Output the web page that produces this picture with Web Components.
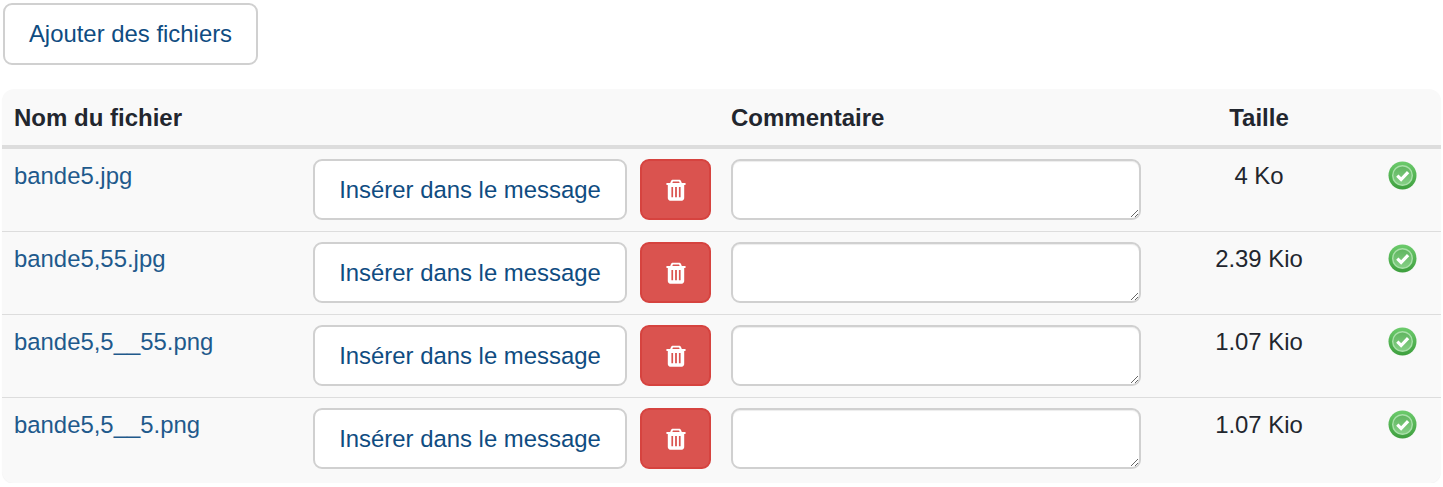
<!DOCTYPE html>
<html lang="fr">
<head>
<meta charset="utf-8">
<title>Fichiers</title>
<style>
  html, body { margin: 0; background: #fff; }
  body { font-family: "Liberation Sans", Arial, sans-serif; color: #22262e; }
</style>
</head>
<body>
<x-attachments>
  <x-button slot="action" style="--w: 255px; --h: 62px">Ajouter des fichiers</x-button>
  <x-file-row name="bande5.jpg" size="4 Ko"></x-file-row>
  <x-file-row name="bande5,55.jpg" size="2.39 Kio"></x-file-row>
  <x-file-row name="bande5,5__55.png" size="1.07 Kio"></x-file-row>
  <x-file-row name="bande5,5__5.png" size="1.07 Kio" last></x-file-row>
</x-attachments>

<script>
/* global HTMLElement customElements */

const COLUMNS = '299px 418px 434px 212px 76px';

class XButton extends HTMLElement {
  constructor() {
    super();
    const shadowRoot = this.attachShadow({ mode: 'open' });
    shadowRoot.innerHTML = `
      <style>
        :host {
          display: inline-flex;
          flex: none;
          align-items: center;
          justify-content: center;
          box-sizing: border-box;
          width: var(--w);
          height: var(--h);
          background: #fff;
          border: 2px solid #d0d0d0;
          border-radius: 9px;
          color: #0f4c81;
          font-size: 23.9px;
          cursor: pointer;
        }
      </style>
      <slot></slot>
    `;
  }
}
customElements.define('x-button', XButton);

class XDeleteButton extends HTMLElement {
  constructor() {
    super();
    const shadowRoot = this.attachShadow({ mode: 'open' });
    shadowRoot.innerHTML = `
      <style>
        :host {
          display: inline-flex;
          flex: none;
          align-items: center;
          justify-content: center;
          box-sizing: border-box;
          width: 71px;
          height: 61px;
          background: #da534f;
          border: 2px solid #d6433f;
          border-radius: 9px;
          cursor: pointer;
        }
        svg { display: block; }
      </style>
      <svg width="20" height="22" viewBox="0 0 20 22">
        <path fill="#fff" fill-rule="evenodd" d="M7 .8h6c.9 0 1.600.5 2 1.300l.8 1.800H19c.4 0 .7.300.7.7v.6c0 .4-.3.7-.7.7h-.8v13.200c0 1.400-1 2.600-2.400 2.600H4.200c-1.400 0-2.400-1.200-2.400-2.600V5.900H1c-.4 0-.7-.3-.7-.7v-.6c0-.4.300-.7.7-.7h3.200L5 2.100c.4-.8 1.100-1.300 2-1.300zM7 2.600l-.7 1.300h7.400L13 2.600H7zM5.400 8v10.200h1.700V8H5.400zm3.700 0v10.200h1.800V8H9.100zm3.800 0v10.200h1.700V8h-1.700z"/>
      </svg>
    `;
  }
}
customElements.define('x-delete-button', XDeleteButton);

class XStatusOk extends HTMLElement {
  constructor() {
    super();
    const shadowRoot = this.attachShadow({ mode: 'open' });
    shadowRoot.innerHTML = `
      <style>
        :host { display: inline-block; width: 29px; height: 29px; }
        svg { display: block; filter: blur(.4px); }
      </style>
      <svg width="29" height="29" viewBox="0 0 29 29">
        <defs>
          <linearGradient id="ring" x1="0" y1="0" x2="0" y2="1">
            <stop offset="0" stop-color="#6ccb6c"/>
            <stop offset="1" stop-color="#3e9f3e"/>
          </linearGradient>
          <linearGradient id="disc" x1="0" y1="0" x2="0" y2="1">
            <stop offset="0" stop-color="#5fb55f"/>
            <stop offset="1" stop-color="#86d086"/>
          </linearGradient>
        </defs>
        <circle cx="14.500" cy="14.500" r="14" fill="url(#ring)"/>
        <circle cx="14.500" cy="14.500" r="9.800" fill="url(#disc)" stroke="#a9e0a9" stroke-width="1.400"/>
        <path d="M9.300 14.700l3.800 3.800 7-7.400" fill="none" stroke="#fff" stroke-width="3.200"/>
      </svg>
    `;
  }
}
customElements.define('x-status-ok', XStatusOk);

class XFileRow extends HTMLElement {
  constructor() {
    super();
    const shadowRoot = this.attachShadow({ mode: 'open' });
    shadowRoot.innerHTML = `
      <style>
        :host {
          display: grid;
          grid-template-columns: ${COLUMNS};
          box-sizing: border-box;
          height: 83px;
          font-size: 23.9px;
          border-bottom: 1.500px solid #ddd;
        }
        :host([last]) { border-bottom: 0; height: 85px; }
        .cell { padding: 10px 12px 0; box-sizing: border-box; min-width: 0; }
        .name { padding-top: 12px; color: #1f5a8c; line-height: 30px; white-space: nowrap; }
        .actions { display: flex; gap: 13px; }
        textarea {
          display: block;
          box-sizing: border-box;
          width: 410px;
          height: 61px;
          margin: 0;
          padding: 6px;
          background: #fff;
          border: 2px solid #d0d0d0;
          border-radius: 9px;
          box-shadow: inset 0 1px 1px rgba(0, 0, 0, .075);
          outline: 0;
          font: inherit;
        }
        .size { padding-top: 12px; line-height: 30px; text-align: center; }
        .status { padding-top: 12px; padding-left: 11px; text-align: center; }
        x-button { --w: 314px; --h: 61px; }
      </style>
      <div class="cell name" id="name"></div>
      <div class="cell actions">
        <x-button>Insérer dans le message</x-button>
        <x-delete-button></x-delete-button>
      </div>
      <div class="cell"><textarea aria-label="Commentaire"></textarea></div>
      <div class="cell size" id="size"></div>
      <div class="cell status"><x-status-ok></x-status-ok></div>
    `;
    this._name = shadowRoot.querySelector('#name');
    this._size = shadowRoot.querySelector('#size');
  }

  static get observedAttributes() {
    return ['name', 'size'];
  }

  attributeChangedCallback(attr, oldValue, newValue) {
    if (attr === 'name') {
      this._name.textContent = newValue;
    }
    if (attr === 'size') {
      this._size.textContent = newValue;
    }
  }
}
customElements.define('x-file-row', XFileRow);

class XAttachments extends HTMLElement {
  constructor() {
    super();
    const shadowRoot = this.attachShadow({ mode: 'open' });
    shadowRoot.innerHTML = `
      <style>
        :host { display: block; padding: 3px 2px 0; }
        .action { height: 62px; padding-left: 1px; margin-bottom: 24px; }
        .table {
          background: #f9f9f9;
          border-radius: 12px;
          box-shadow: 0 1px 1px rgba(0, 0, 0, .05);
          width: 1439px;
        }
        .head {
          display: grid;
          grid-template-columns: ${COLUMNS};
          box-sizing: border-box;
          height: 60px;
          border-bottom: 4px solid #ddd;
          font-size: 24px;
          font-weight: bold;
          line-height: 57px;
          color: #22262e;
        }
        .head div { padding: 0 12px; white-space: nowrap; }
        .center { text-align: center; }
      </style>
      <div class="action"><slot name="action"></slot></div>
      <div class="table">
        <div class="head">
          <div>Nom du fichier</div>
          <div></div>
          <div>Commentaire</div>
          <div class="center">Taille</div>
          <div></div>
        </div>
        <slot></slot>
      </div>
    `;
  }
}
customElements.define('x-attachments', XAttachments);
</script>
</body>
</html>
